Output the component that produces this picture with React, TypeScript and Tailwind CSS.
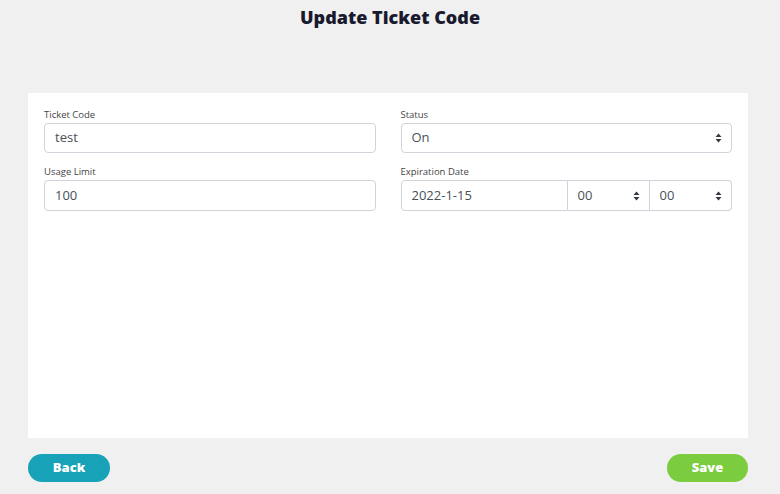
import React from "react";

function Arrows() {
  return (
    <svg width="7" height="10" viewBox="0 0 7 10" className="shrink-0">
      <path d="M3.5 0.5 L6.5 4 L0.5 4 Z" fill="#343a40" />
      <path d="M3.5 9.5 L6.5 6 L0.5 6 Z" fill="#343a40" />
    </svg>
  );
}

function Label({ children }: { children: React.ReactNode }) {
  return <div className="text-[9.5px] leading-[12px] text-[#444] mb-[2px]">{children}</div>;
}

export default function App() {
  return (
    <div
      className="w-[780px] h-[494px] bg-[#f0f0f0] flex flex-col"
      style={{ fontFamily: "'Open Sans', 'Noto Sans', sans-serif" }}
    >
      <div
        className="h-[35px] pt-[5px] text-center text-[18px] leading-[24px] font-extrabold text-[#1a1a2e]"
        style={{ fontFamily: "'Open Sans', sans-serif" }}
      >
        Update Ticket Code
      </div>
      <div className="mt-[58px] ml-[28px] w-[720px] h-[345px] bg-white px-[16px]">
        <div className="grid grid-cols-2 gap-x-[25px] pt-[16px]">
          <div>
            <Label>Ticket Code</Label>
            <div className="h-[30px] border border-[#ced4da] rounded-[4px] flex items-center px-[10px] text-[13px] text-[#495057]">
              test
            </div>
          </div>
          <div>
            <Label>Status</Label>
            <div className="h-[30px] border border-[#ced4da] rounded-[4px] flex items-center justify-between pl-[10px] pr-[9px] text-[13px] text-[#495057]">
              <span>On</span>
              <Arrows />
            </div>
          </div>
          <div className="mt-[13px]">
            <Label>Usage Limit</Label>
            <div className="h-[31px] border border-[#ced4da] rounded-[4px] flex items-center px-[10px] text-[13px] text-[#495057]">
              100
            </div>
          </div>
          <div className="mt-[13px]">
            <Label>Expiration Date</Label>
            <div className="h-[31px] flex text-[13px] text-[#495057]">
              <div className="w-[167px] border border-[#ced4da] rounded-l-[4px] flex items-center px-[10px]">
                2022-1-15
              </div>
              <div className="w-[82px] border-y border-r border-[#ced4da] flex items-center justify-between pl-[10px] pr-[9px]">
                <span>00</span>
                <Arrows />
              </div>
              <div className="flex-1 border-y border-r border-[#ced4da] rounded-r-[4px] flex items-center justify-between pl-[10px] pr-[9px]">
                <span>00</span>
                <Arrows />
              </div>
            </div>
          </div>
        </div>
      </div>
      <div className="ml-[28px] w-[720px] mt-[16px] flex justify-between">
        <button className="w-[82px] h-[28px] rounded-full bg-[#17a2b8] text-white font-extrabold text-[13px]">
          Back
        </button>
        <button className="w-[81px] h-[28px] rounded-full bg-[#7ccc3f] text-white font-extrabold text-[13px]">
          Save
        </button>
      </div>
    </div>
  );
}
